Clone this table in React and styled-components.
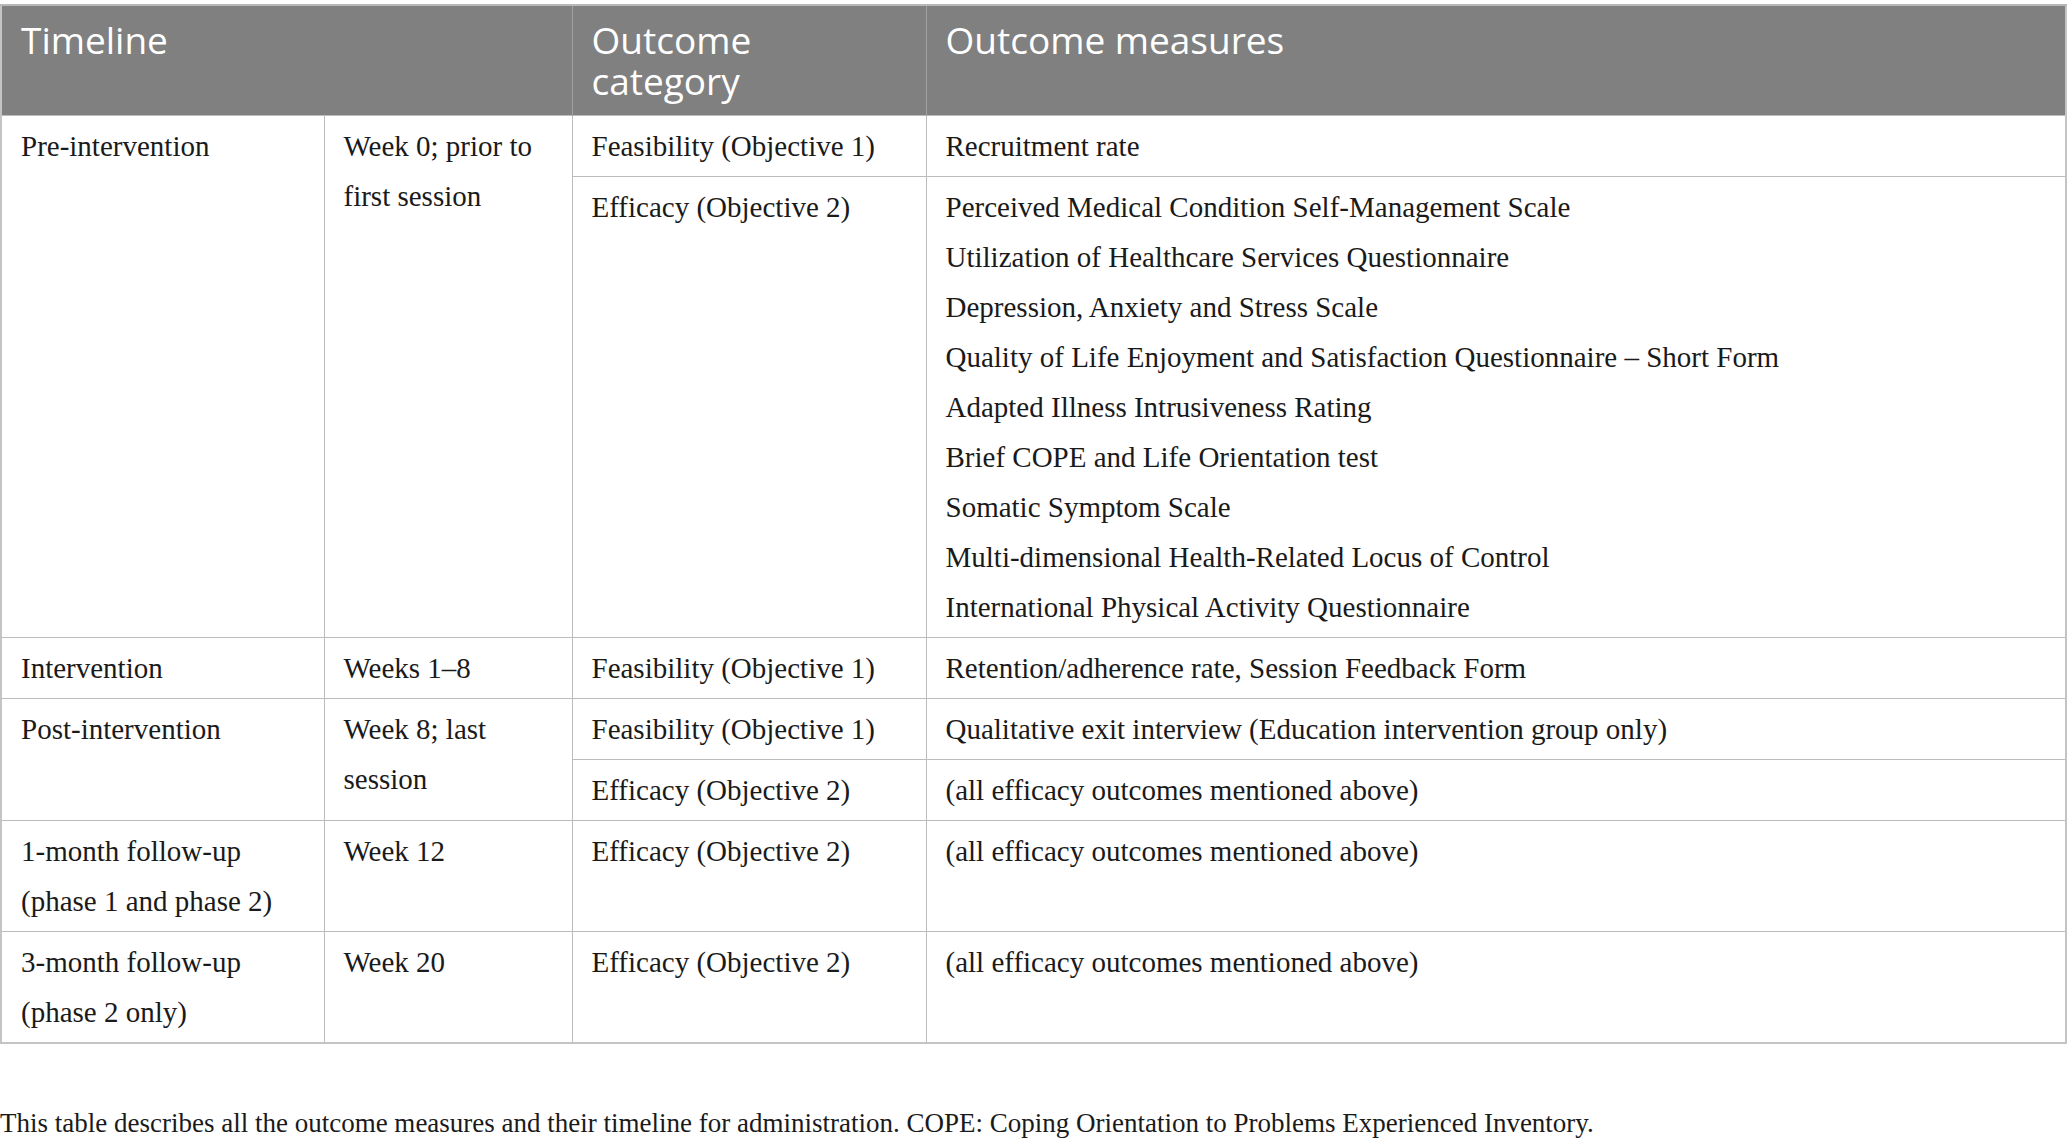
import React from 'react';
import styled, { createGlobalStyle } from 'styled-components';

const GlobalStyle = createGlobalStyle`
  html, body {
    margin: 0;
    padding: 0;
    background: #ffffff;
  }
`;

const Page = styled.div`
  width: 2067px;
  padding-top: 4px;
  font-family: "Liberation Serif", "Times New Roman", serif;
  color: #1a1a1a;
`;

const Table = styled.table`
  width: 100%;
  border-collapse: collapse;
  table-layout: fixed;
  border: 2px solid #c4c4c4;
`;

const HeadCell = styled.th`
  background: #7f807f;
  color: #ffffff;
  font-family: "Open Sans", "Noto Sans", sans-serif;
  font-weight: 400;
  font-size: 37px;
  line-height: 41px;
  text-align: left;
  vertical-align: top;
  padding: 13px 20px 14px 19px;
  border-left: 1px solid #a0a1a0;
  border-top: 2px solid #b8b8b8;
`;

const Cell = styled.td`
  font-size: 29px;
  line-height: 50px;
  vertical-align: top;
  padding: 5px 20px 5px 19px;
  border: 1px solid #bcbcbc;
`;

const Caption = styled.p`
  margin: 61px 0 0;
  font-size: 27px;
  line-height: 36px;
  color: #1a1a1a;
`;

const efficacyMeasures = [
  'Perceived Medical Condition Self-Management Scale',
  'Utilization of Healthcare Services Questionnaire',
  'Depression, Anxiety and Stress Scale',
  'Quality of Life Enjoyment and Satisfaction Questionnaire – Short Form',
  'Adapted Illness Intrusiveness Rating',
  'Brief COPE and Life Orientation test',
  'Somatic Symptom Scale',
  'Multi-dimensional Health-Related Locus of Control',
  'International Physical Activity Questionnaire',
];

const Lines = ({ items }) =>
  items.map((t, i) => (
    <React.Fragment key={i}>
      {i > 0 && <br />}
      {t}
    </React.Fragment>
  ));

const App = () => (
  <Page>
    <GlobalStyle />
    <Table>
      <colgroup>
        <col style={{ width: 323 }} />
        <col style={{ width: 248 }} />
        <col style={{ width: 354 }} />
        <col />
      </colgroup>
      <thead>
        <tr>
          <HeadCell colSpan={2}>Timeline</HeadCell>
          <HeadCell>
            <Lines items={['Outcome', 'category']} />
          </HeadCell>
          <HeadCell>Outcome measures</HeadCell>
        </tr>
      </thead>
      <tbody>
        <tr>
          <Cell rowSpan={2}>Pre-intervention</Cell>
          <Cell rowSpan={2}>
            <Lines items={['Week 0; prior to', 'first session']} />
          </Cell>
          <Cell>Feasibility (Objective 1)</Cell>
          <Cell>Recruitment rate</Cell>
        </tr>
        <tr>
          <Cell>Efficacy (Objective 2)</Cell>
          <Cell>
            <Lines items={efficacyMeasures} />
          </Cell>
        </tr>
        <tr>
          <Cell>Intervention</Cell>
          <Cell>Weeks 1–8</Cell>
          <Cell>Feasibility (Objective 1)</Cell>
          <Cell>Retention/adherence rate, Session Feedback Form</Cell>
        </tr>
        <tr>
          <Cell rowSpan={2}>Post-intervention</Cell>
          <Cell rowSpan={2}>
            <Lines items={['Week 8; last', 'session']} />
          </Cell>
          <Cell>Feasibility (Objective 1)</Cell>
          <Cell>Qualitative exit interview (Education intervention group only)</Cell>
        </tr>
        <tr>
          <Cell>Efficacy (Objective 2)</Cell>
          <Cell>(all efficacy outcomes mentioned above)</Cell>
        </tr>
        <tr>
          <Cell>
            <Lines items={['1-month follow-up', '(phase 1 and phase 2)']} />
          </Cell>
          <Cell>Week 12</Cell>
          <Cell>Efficacy (Objective 2)</Cell>
          <Cell>(all efficacy outcomes mentioned above)</Cell>
        </tr>
        <tr>
          <Cell>
            <Lines items={['3-month follow-up', '(phase 2 only)']} />
          </Cell>
          <Cell>Week 20</Cell>
          <Cell>Efficacy (Objective 2)</Cell>
          <Cell>(all efficacy outcomes mentioned above)</Cell>
        </tr>
      </tbody>
    </Table>
    <Caption>
      This table describes all the outcome measures and their timeline for administration. COPE:
      Coping Orientation to Problems Experienced Inventory.
    </Caption>
  </Page>
);

export default App;
